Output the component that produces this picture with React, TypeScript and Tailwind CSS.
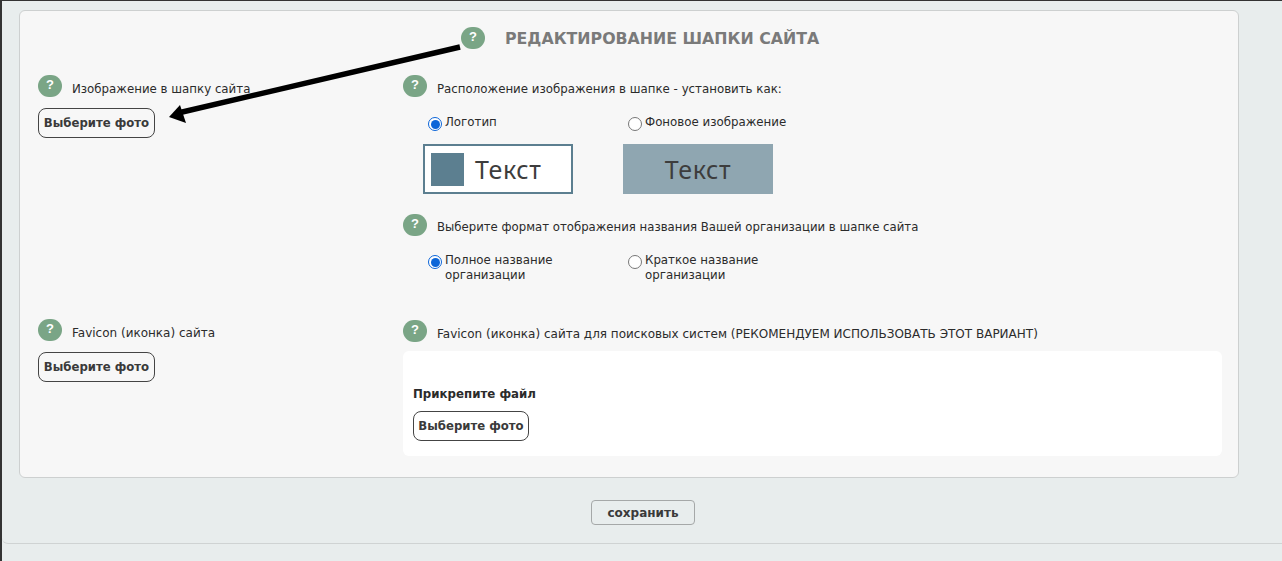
const font = "font-['DejaVu_Sans',sans-serif]"

const Help = () => (
    <span className="flex h-[22px] w-6 shrink-0 items-center justify-center rounded-full bg-[#7aa586] pb-[2px] text-[13px] font-bold text-white font-['Liberation_Sans',sans-serif]">?</span>
)

const HelpLabel = ({ text, size = 'text-[11.8px]', offset = 'mt-[5px]' }: { text: string, size?: string, offset?: string }) => (
    <div className="flex h-[22px] items-center">
        <Help />
        <span className={`ml-[10px] whitespace-nowrap text-[#2b2b2b] ${offset} ${size}`}>{text}</span>
    </div>
)

const PhotoButton = ({ white }: { white?: boolean }) => (
    <button className={`h-[30px] rounded-lg border border-[#444] pt-[2px] text-[11.7px] font-bold text-[#3a3a3a] ${white ? 'w-[116px] bg-white' : 'w-[117px] bg-transparent'}`}>
        Выберите фото
    </button>
)

const Radio = ({ checked, label }: { checked?: boolean, label: string }) => (
    <label className="flex w-[200px] items-start">
        {checked ? (
            <span className="mt-[3px] flex h-[14px] w-[14px] shrink-0 items-center justify-center rounded-full border border-[#0b65d8] bg-white">
                <span className="h-[9px] w-[9px] rounded-full bg-[#0b65d8]"></span>
            </span>
        ) : (
            <span className="mt-[3px] h-[14px] w-[14px] shrink-0 rounded-full border border-[#777] bg-white"></span>
        )}
        <span className="ml-[3px] w-[165px] pt-[1px] text-[11.8px] leading-[15px] text-[#2b2b2b]">{label}</span>
    </label>
)

const Arrow = () => (
    <svg className="absolute left-[140px] top-[20px]" width="320" height="110" viewBox="0 0 320 110">
        <path d="M300 16 L18 82" stroke="#000" strokeWidth="5.5" fill="none" />
        <path d="M9 86 L20 74 L26 92 Z" fill="#000" />
    </svg>
)

export default function App() {
    return (
        <div className={`${font} h-[561px] w-[1282px] overflow-hidden border-t border-l-[2px] border-[#333] bg-[#e8eded]`}>
            <div className="h-[543px] rounded-bl-md border-b border-[#cfd3d3] pl-[17px] pt-[9px]">
                <div className="relative h-[468px] w-[1220px] rounded-md border border-[#cdd0d0] bg-[#f7f7f7] pl-[18px] pt-4">
                    <Arrow />
                    <div className="flex h-[22px] items-center pl-[423px]">
                        <Help />
                        <h1 className="ml-5 mt-[1px] text-[15.8px] font-bold text-[#7a7a7a]">РЕДАКТИРОВАНИЕ ШАПКИ САЙТА</h1>
                    </div>

                    <div className="mt-[26px] grid grid-cols-[365px_1fr]">
                        <div className="flex flex-col">
                            <HelpLabel offset="mt-[7px]" text="Изображение в шапку сайта" />
                            <div className="mt-[11px]"><PhotoButton /></div>
                            <div className="mt-[181px]"><HelpLabel size="text-[12px]" text="Favicon (иконка) сайта" /></div>
                            <div className="mt-[11px]"><PhotoButton /></div>
                        </div>

                        <div className="flex flex-col">
                            <HelpLabel offset="mt-[7px]" text="Расположение изображения в шапке - установить как:" />
                            <div className="mt-[17px] flex pl-[25px]">
                                <Radio checked label="Логотип" />
                                <Radio label="Фоновое изображение" />
                            </div>
                            <div className="mt-[13px] flex gap-[50px] pl-5">
                                <div className="flex h-[50px] w-[150px] items-center border-2 border-[#5c7f90] bg-white pl-[6px]">
                                    <span className="h-[33px] w-[33px] bg-[#5c7f90]"></span>
                                    <span className="ml-[11px] pt-[2px] font-['Noto_Sans',sans-serif] text-[25px] tracking-[0.6px] text-[#3d3d3d]">Текст</span>
                                </div>
                                <div className="flex h-[50px] w-[150px] items-center justify-center bg-[#8fa6b1] pt-[2px] font-['Noto_Sans',sans-serif] text-[25px] tracking-[0.6px] text-[#3d3d3d]">Текст</div>
                            </div>
                            <div className="mt-5"><HelpLabel size="text-[11.73px]" text="Выберите формат отображения названия Вашей организации в шапке сайта" /></div>
                            <div className="mt-[16px] flex pl-[25px]">
                                <Radio checked label="Полное название организации" />
                                <Radio label="Краткое название организации" />
                            </div>
                            <div className="mt-[37px]"><HelpLabel size="text-[12px]" text="Favicon (иконка) сайта для поисковых систем (РЕКОМЕНДУЕМ ИСПОЛЬЗОВАТЬ ЭТОТ ВАРИАНТ)" /></div>
                            <div className="mt-[9px] h-[105px] w-[819px] rounded-md bg-white pl-[10px] pt-[35px]">
                                <p className="text-[11.8px] font-bold leading-[16px] text-[#2b2b2b]">Прикрепите файл</p>
                                <div className="mt-[9px]"><PhotoButton white /></div>
                            </div>
                        </div>
                    </div>
                </div>
                <div className="mt-[22px] flex w-[1220px] justify-center pl-[28px]">
                    <button className="h-[25px] w-[104px] rounded-[4px] border border-[#a5a8a8] bg-[#e8eded] text-[12px] font-bold text-[#3a3a3a]">сохранить</button>
                </div>
            </div>
        </div>
    )
}
